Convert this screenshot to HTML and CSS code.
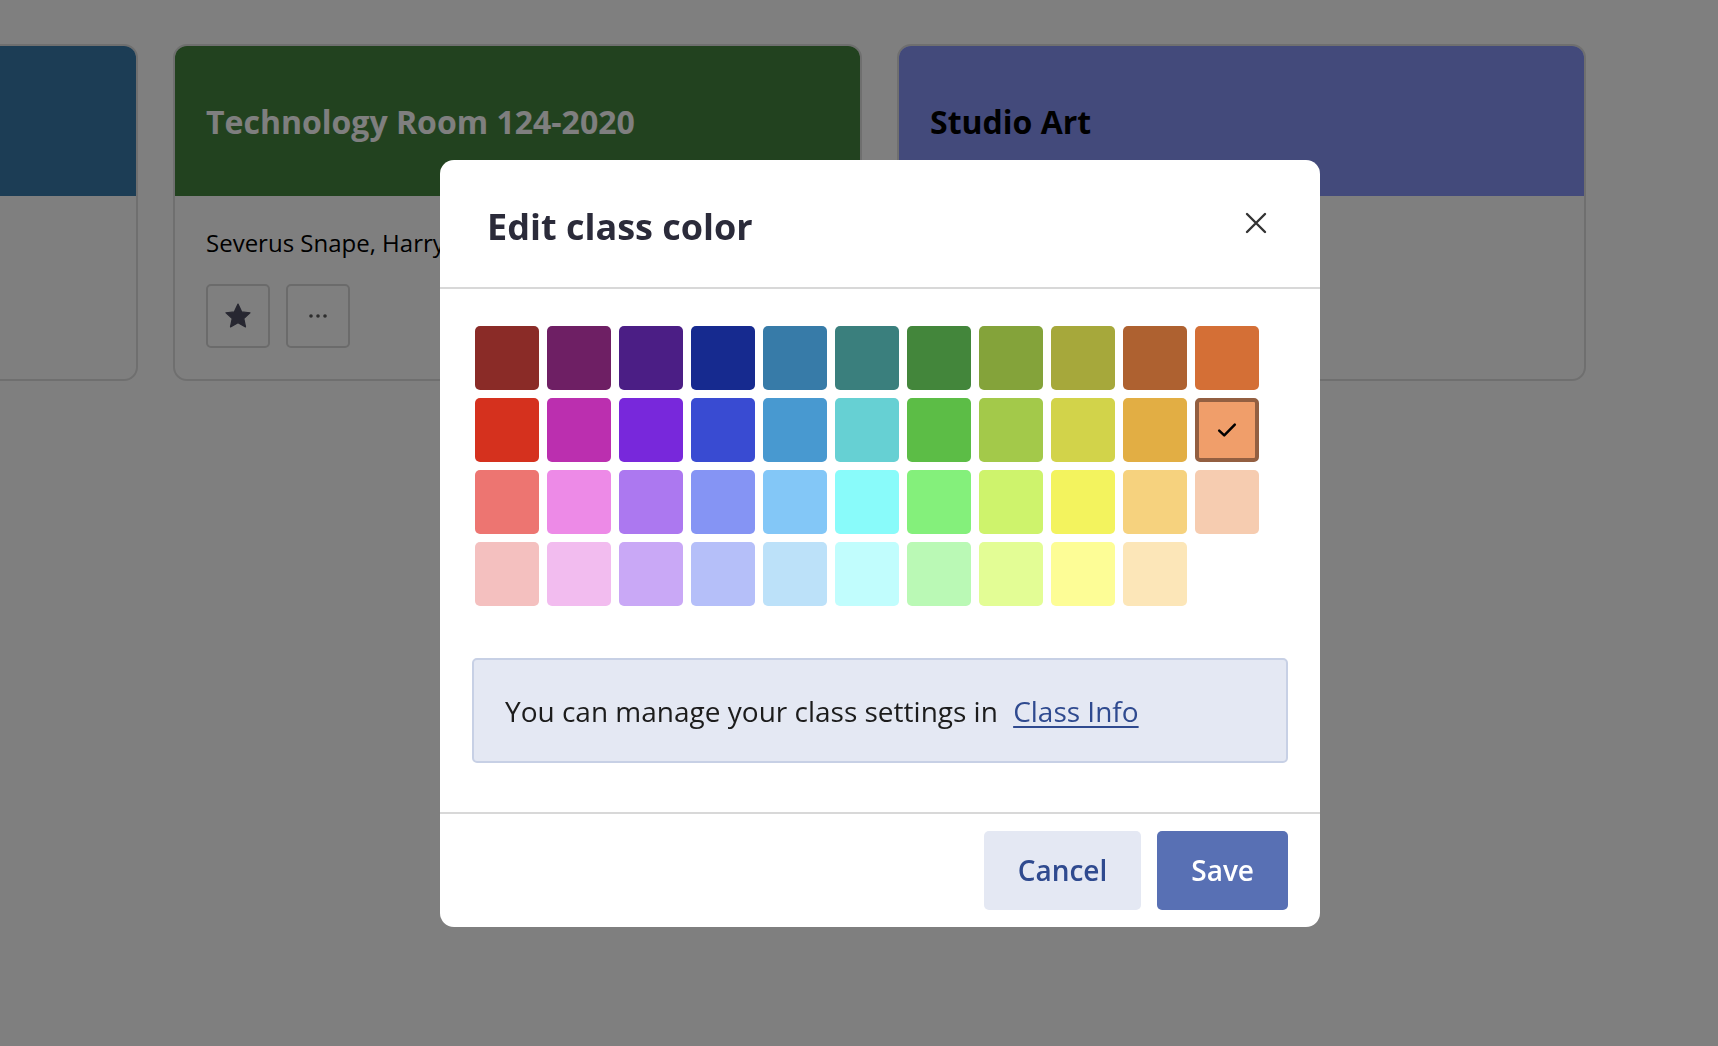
FILE: index.html
```html
<!DOCTYPE html>
<html lang="en">
<head>
    <meta charset="UTF-8">
    <meta name="viewport" content="width=device-width, initial-scale=1.0">
    <title>Classes</title>
    <link rel="stylesheet" href="styles.css">
</head>
<body>
    <div class="class-list">
        <div class="class-card">
            <div class="card-header header-blue">
                <h2>Biology 101</h2>
            </div>
            <div class="card-body">
                <p class="teachers">Minerva McGonagall</p>
                <div class="card-actions">
                    <button class="card-button star">
                        <svg width="30" height="30" viewBox="0 0 24 24"><path d="M12 2.5l2.9 6.2 6.7.7-5 4.6 1.4 6.7L12 17.3l-6 3.4 1.4-6.7-5-4.6 6.7-.7z" fill="currentColor" stroke="currentColor" stroke-width="1" stroke-linejoin="round"/></svg>
                    </button>
                    <button class="card-button dots">
                        <svg width="22" height="6" viewBox="0 0 22 6"><circle cx="4" cy="3" r="1.8"/><circle cx="11" cy="3" r="1.8"/><circle cx="18" cy="3" r="1.8"/></svg>
                    </button>
                </div>
            </div>
        </div>

        <div class="class-card">
            <div class="card-header header-green">
                <h2>Technology Room 124-2020</h2>
            </div>
            <div class="card-body">
                <p class="teachers">Severus Snape, Harry Potter</p>
                <div class="card-actions">
                    <button class="card-button star">
                        <svg width="30" height="30" viewBox="0 0 24 24"><path d="M12 2.5l2.9 6.2 6.7.7-5 4.6 1.4 6.7L12 17.3l-6 3.4 1.4-6.7-5-4.6 6.7-.7z" fill="currentColor" stroke="currentColor" stroke-width="1" stroke-linejoin="round"/></svg>
                    </button>
                    <button class="card-button dots">
                        <svg width="22" height="6" viewBox="0 0 22 6"><circle cx="4" cy="3" r="1.8"/><circle cx="11" cy="3" r="1.8"/><circle cx="18" cy="3" r="1.8"/></svg>
                    </button>
                </div>
            </div>
        </div>

        <div class="class-card">
            <div class="card-header header-indigo">
                <h2 class="dark">Studio Art</h2>
            </div>
            <div class="card-body">
                <p class="teachers">Luna Lovegood</p>
                <div class="card-actions">
                    <button class="card-button star">
                        <svg width="30" height="30" viewBox="0 0 24 24"><path d="M12 2.5l2.9 6.2 6.7.7-5 4.6 1.4 6.7L12 17.3l-6 3.4 1.4-6.7-5-4.6 6.7-.7z" fill="currentColor" stroke="currentColor" stroke-width="1" stroke-linejoin="round"/></svg>
                    </button>
                    <button class="card-button dots">
                        <svg width="22" height="6" viewBox="0 0 22 6"><circle cx="4" cy="3" r="1.8"/><circle cx="11" cy="3" r="1.8"/><circle cx="18" cy="3" r="1.8"/></svg>
                    </button>
                </div>
            </div>
        </div>
    </div>

    <div class="overlay">
        <div class="modal">
            <div class="modal-header">
                <h1>Edit class color</h1>
                <button class="close-button" aria-label="Close">
                    <svg width="22" height="22" viewBox="0 0 22 22"><path d="M2 2L20 20M20 2L2 20" stroke="#333" stroke-width="2.4" stroke-linecap="round"/></svg>
                </button>
            </div>

            <div class="modal-body">
                <div class="swatches" id="swatches"></div>

                <div class="info-box">
                    <p>You can manage your class settings in <a href="#">Class Info</a></p>
                </div>
            </div>

            <div class="modal-footer">
                <button class="btn btn-cancel">Cancel</button>
                <button class="btn btn-save">Save</button>
            </div>
        </div>
    </div>

    <script>
        var colors = [
            '#8a2b27', '#6e1f64', '#4b1e85', '#162a8f', '#377ba8', '#3a7f7d', '#43863b', '#84a33a', '#a6a83b', '#ae6130', '#d46f36',
            '#d5311e', '#bb2faf', '#7828db', '#394bd2', '#4899d0', '#66d0d3', '#5cbd46', '#a3c94a', '#d2d34a', '#e2ae44', '#f09e6a',
            '#ed7571', '#ed8ae7', '#ac78f0', '#8594f4', '#83c7f7', '#89fbfa', '#84f07b', '#cef36c', '#f3f35e', '#f6d27e', '#f6ccb0',
            '#f4c0bf', '#f2bcef', '#c9a8f6', '#b5bff9', '#bce1f9', '#c1fdfd', '#baf9b5', '#e3fd95', '#fdfd96', '#fce6b8'
        ];
        var selected = 21;
        var grid = document.getElementById('swatches');

        colors.forEach(function(color, i) {
            var swatch = document.createElement('button');
            swatch.className = 'swatch';
            swatch.style.backgroundColor = color;
            if (i === selected) {
                swatch.classList.add('selected');
                swatch.innerHTML = '<svg width="24" height="24" viewBox="0 0 20 20"><path d="M3.5 10.5l4.2 4 8.8-9" fill="none" stroke="#000" stroke-width="2.1" stroke-linecap="round" stroke-linejoin="round"/></svg>';
            }
            grid.appendChild(swatch);
        });
    </script>
</body>
</html>
```

FILE: styles.css
```css
* {
    box-sizing: border-box;
}

body, html {
    margin: 0;
    height: 100%;
    overflow: hidden;
    font-family: 'Open Sans', 'Noto Sans', Arial, sans-serif;
    background-color: #ffffff;
}

.class-list {
    display: flex;
    gap: 35px;
    padding-top: 44px;
    margin-left: -551px;
}

.class-card {
    flex: 0 0 689px;
    height: 337px;
    border: 2px solid #dfdfdf;
    border-radius: 14px;
    overflow: hidden;
    background-color: #fff;
}

.card-header {
    height: 150px;
    display: flex;
    align-items: center;
    padding: 0 31px;
}

.card-header h2 {
    margin: 0;
    font-size: 32px;
    font-weight: 700;
    color: #fff;
}

.card-header h2.dark {
    color: #000;
}

.header-blue { background-color: #387aaa; }
.header-green { background-color: #44843e; }
.header-indigo { background-color: #8694f6; }

.card-body {
    padding: 31px 31px 0;
}

.teachers {
    margin: 0;
    font-size: 24px;
    line-height: 32px;
    color: #000;
    white-space: nowrap;
}

.card-actions {
    display: flex;
    gap: 16px;
    margin-top: 25px;
}

.card-button {
    width: 64px;
    height: 64px;
    border: 2px solid #d6d6d6;
    border-radius: 5px;
    background: #fff;
    display: flex;
    align-items: center;
    justify-content: center;
    padding: 0;
    cursor: pointer;
}

.card-button.star {
    color: #4f4f62;
}

.card-button.dots {
    fill: #5a5a5a;
}

/* modal */
.overlay {
    position: fixed;
    inset: 0;
    background-color: rgba(0, 0, 0, 0.5);
    display: flex;
    align-items: center;
    justify-content: center;
    padding: 40px 0 0 42px;
}

.modal {
    width: 880px;
    background-color: #fff;
    border-radius: 14px;
    overflow: hidden;
}

.modal-header {
    height: 129px;
    display: flex;
    align-items: center;
    justify-content: space-between;
    padding: 0 53px 0 47px;
    border-bottom: 2px solid #d8d8d8;
}

.modal-header h1 {
    margin: 0;
    padding-top: 7px;
    font-size: 36px;
    font-weight: 700;
    color: #2b2b3a;
}

.close-button {
    border: none;
    background: none;
    padding: 0;
    display: flex;
    cursor: pointer;
}

.modal-body {
    padding: 37px 32px 49px;
}

.swatches {
    display: grid;
    grid-template-columns: repeat(11, 64px);
    gap: 8px;
    margin: 0 3px;
}

.swatch {
    width: 64px;
    height: 64px;
    border: none;
    border-radius: 5px;
    padding: 0;
    display: flex;
    align-items: center;
    justify-content: center;
    cursor: pointer;
}

.swatch.selected {
    border: 4px solid #935f41;
}

.info-box {
    margin-top: 52px;
    height: 105px;
    display: flex;
    align-items: center;
    padding: 0 31px;
    background-color: #e4e8f3;
    border: 2px solid #c7d0e5;
    border-radius: 5px;
}

.info-box p {
    margin: 0;
    padding-top: 2px;
    font-size: 28px;
    color: #1c1c1c;
}

.info-box a {
    margin-left: 8px;
    color: #2f4a8f;
    text-decoration: underline;
    text-underline-offset: 4px;
}

.modal-footer {
    display: flex;
    justify-content: flex-end;
    gap: 16px;
    padding: 17px 32px 17px;
    border-top: 2px solid #d8d8d8;
}

.btn {
    height: 79px;
    padding: 0 34px;
    border: none;
    border-radius: 5px;
    font-family: 'Open Sans', 'Noto Sans', Arial, sans-serif;
    font-size: 28px;
    font-weight: 600;
    cursor: pointer;
}

.btn-cancel {
    background-color: #e4e8f3;
    color: #2f4a8f;
}

.btn-save {
    background-color: #5870b4;
    color: #fff;
}
```
